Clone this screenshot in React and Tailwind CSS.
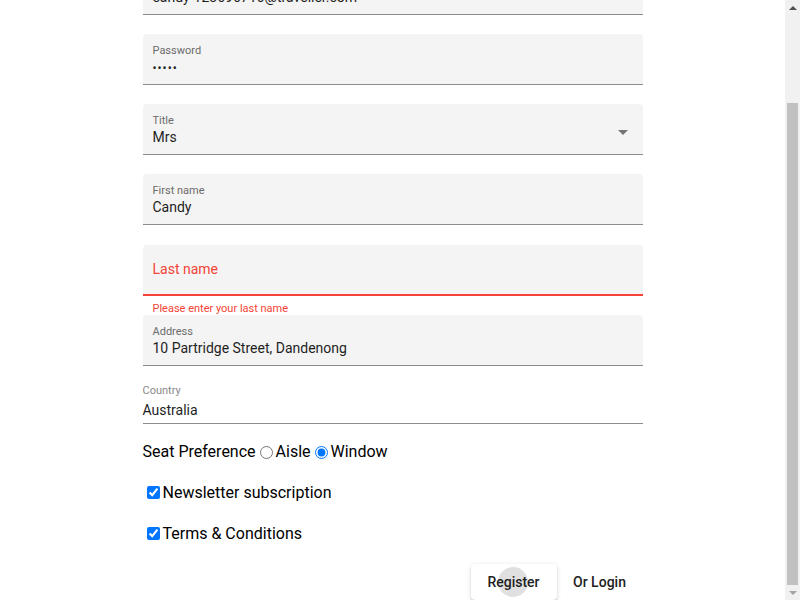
import React, { useLayoutEffect, useRef } from "react";

const font = { fontFamily: "Roboto, 'Noto Sans', Arial, sans-serif" };

// Filled material-style text field
const FilledField = ({ label, value, children, select, className = "mb-[19px]" }) => (
    <div className={className}>
        <div className="relative h-[51px] rounded-t-[4px] bg-[#f4f4f4] border-b border-[#8c8c8c] px-[10px] pt-[10px]">
            <div className="text-[11px] leading-[13px] text-[#6b6b6b]">{label}</div>
            <div className="text-[14px] leading-[20px] text-[#1f1f1f]">{children || value}</div>
            {select && (
                <div className="absolute right-[15px] top-[26px] w-0 h-0 border-l-[5px] border-r-[5px] border-t-[5px] border-l-transparent border-r-transparent border-t-[#757575]" />
            )}
        </div>
    </div>
);

// classic browser scrollbar, scrolled to the end
const Scrollbar = () => (
    <div className="w-[15px] h-screen bg-[#f1f1f1] flex flex-col items-center">
        <div className="h-[15px] w-full flex items-center justify-center">
            <div className="w-0 h-0 border-l-[4px] border-r-[4px] border-b-[4px] border-l-transparent border-r-transparent border-b-[#505050]" />
        </div>
        <div className="flex-1 w-full px-[2px] flex flex-col">
            <div className="h-[88px]" />
            <div className="flex-1 bg-[#c1c1c1]" />
        </div>
        <div className="h-[15px] w-full flex items-center justify-center">
            <div className="w-0 h-0 border-l-[4px] border-r-[4px] border-t-[4px] border-l-transparent border-r-transparent border-t-[#a3a3a3]" />
        </div>
    </div>
);

const App = () => {
    const scroller = useRef(null);

    useLayoutEffect(() => {
        if (scroller.current) scroller.current.scrollTop = scroller.current.scrollHeight;
    }, []);

    return (
        <div className="h-screen flex bg-white" style={font}>
            <div ref={scroller} className="flex-1 h-screen overflow-hidden">
                <div className="w-[500px] mx-auto pt-[73px]">
                    <FilledField label="Email" value="candy-123696716@traveller.com" />
                    <FilledField label="Password">
                        <span className="tracking-[1px] text-[12px]">•••••</span>
                    </FilledField>
                    <FilledField label="Title" value="Mrs" select />
                    <FilledField label="First name" value="Candy" className="mb-[20px]" />

                    {/* invalid field */}
                    <div className="mb-[19px] relative">
                        <div className="h-[51px] rounded-t-[4px] bg-[#f4f4f4] border-b-2 border-[#f44336] px-[10px] flex items-center">
                            <span className="text-[14px] text-[#f44336]">Last name</span>
                        </div>
                        <div className="absolute left-[10px] top-[57px] text-[11px] leading-[13px] text-[#f44336]">
                            Please enter your last name
                        </div>
                    </div>

                    <FilledField label="Address" value="10 Partridge Street, Dandenong" className="mb-[18px]" />

                    <div className="border-b border-[#8c8c8c] pb-[3px]">
                        <div className="text-[11px] leading-[13px] text-[#8a8a8a]">Country</div>
                        <div className="mt-[3px] text-[14px] leading-[20px] text-[#1f1f1f]">Australia</div>
                    </div>

                    <div className="mt-[7px] text-[16px] text-black">
                        <div className="h-[41px] flex items-center">
                            <span>Seat Preference</span>
                            <input type="radio" name="seat" className="ml-[4px] mr-[3px] mt-[2px]" />
                            <span>Aisle</span>
                            <input type="radio" name="seat" defaultChecked className="ml-[4px] mr-[3px] mt-[2px]" />
                            <span>Window</span>
                        </div>
                        <label className="h-[41px] flex items-center">
                            <input type="checkbox" defaultChecked className="ml-[4px] mr-[3px]" />
                            <span>Newsletter subscription</span>
                        </label>
                        <label className="h-[41px] flex items-center">
                            <input type="checkbox" defaultChecked className="ml-[4px] mr-[3px]" />
                            <span>Terms &amp; Conditions</span>
                        </label>
                    </div>

                    <div className="mt-[10px] flex justify-end">
                        <button className="relative w-[86px] h-[36px] rounded-[4px] bg-white shadow-[0_3px_1px_-2px_rgba(0,0,0,0.2),0_2px_2px_0_rgba(0,0,0,0.14),0_1px_5px_0_rgba(0,0,0,0.12)] text-[14px] font-medium text-[#222] overflow-hidden">
                            <span className="absolute left-[27px] top-[3px] w-[30px] h-[30px] rounded-full bg-[#e0e0e0]" />
                            <span className="relative">Register</span>
                        </button>
                        <button className="w-[86px] h-[36px] text-[14px] font-medium text-[#222]">Or Login</button>
                    </div>
                </div>
            </div>
            <Scrollbar />
        </div>
    );
};

export default App;
